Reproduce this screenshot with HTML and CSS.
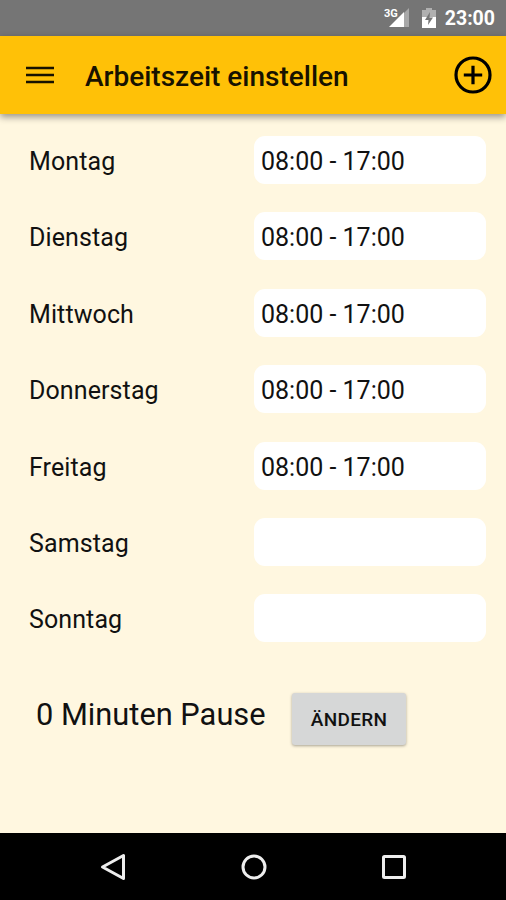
FILE: index.html
```html
<!DOCTYPE html>
<html lang="de">
<head>
    <meta charset="UTF-8">
    <meta name="viewport" content="width=device-width, initial-scale=1.0">
    <title>Arbeitszeit einstellen</title>
    <link rel="stylesheet" href="styles.css">
</head>
<body>
    <div class="status-bar">
        <svg class="signal" width="26" height="22" viewBox="0 0 26 22">
            <path d="M25 1V20H20V6Z" fill="#a8a8a8"/>
            <path d="M5 20L20 5V20Z" fill="#fff"/>
            <text x="0" y="10" class="network">3G</text>
        </svg>
        <svg class="battery" width="14" height="22" viewBox="0 0 14 22">
            <path d="M4 1H10V3H14V11H0V3H4Z" fill="#b0b0b0"/>
            <path d="M0 10H14V21H0Z" fill="#fff"/>
            <path d="M8 5L3 13H6.5L6 18L11 10.5H7.500Z" fill="#757575"/>
        </svg>
        <span class="clock">23:00</span>
    </div>

    <header class="toolbar">
        <svg class="menu" width="28" height="18" viewBox="0 0 28 18">
            <path d="M0 2H28M0 9H28M0 16H28" stroke="#171200" stroke-width="2.3"/>
        </svg>
        <h1>Arbeitszeit einstellen</h1>
        <svg class="add" width="38" height="38" viewBox="0 0 38 38">
            <circle cx="19" cy="19" r="17" fill="none" stroke="#000" stroke-width="3.2"/>
            <path d="M19 9.800V28.200M9.800 19H28.200" stroke="#000" stroke-width="3.2"/>
        </svg>
    </header>

    <main>
        <div class="day"><label>Montag</label><div class="time">08:00 - 17:00</div></div>
        <div class="day"><label>Dienstag</label><div class="time">08:00 - 17:00</div></div>
        <div class="day"><label>Mittwoch</label><div class="time">08:00 - 17:00</div></div>
        <div class="day"><label>Donnerstag</label><div class="time">08:00 - 17:00</div></div>
        <div class="day"><label>Freitag</label><div class="time">08:00 - 17:00</div></div>
        <div class="day"><label>Samstag</label><div class="time"></div></div>
        <div class="day"><label>Sonntag</label><div class="time"></div></div>

        <div class="pause">
            <span>0 Minuten Pause</span>
            <button type="button">ÄNDERN</button>
        </div>
    </main>

    <nav class="nav-bar">
        <svg width="28" height="28" viewBox="0 0 28 28">
            <path d="M3.500 14L24.500 2.500V25.500Z"/>
        </svg>
        <svg width="28" height="28" viewBox="0 0 28 28">
            <circle cx="14" cy="14" r="11"/>
        </svg>
        <svg width="28" height="28" viewBox="0 0 28 28">
            <rect x="3.500" y="3.500" width="21" height="21" rx="1"/>
        </svg>
    </nav>
</body>
</html>
```
FILE: styles.css
```css
* {
    box-sizing: border-box;
}
body {
    font-family: Roboto, sans-serif;
    background-color: #fff7e0;
    color: #111;
    display: flex;
    flex-direction: column;
    height: 900px;
    margin: 0;
    overflow: hidden;
}
svg {
    display: block;
    flex: none;
}

/* Status bar */
.status-bar {
    display: flex;
    align-items: center;
    justify-content: flex-end;
    height: 36px;
    padding: 0 11px 0 0;
    background-color: #757575;
    color: #fff;
}
.network {
    font-size: 11px;
    font-weight: 700;
    fill: #fff;
}
.battery {
    margin: 0 9px 0 12px;
}
.clock {
    font-size: 19.5px;
    font-weight: 700;
    line-height: 36px;
    padding-top: 2px;
}

/* Toolbar */
.toolbar {
    display: flex;
    align-items: center;
    height: 78px;
    padding: 0 14px 0 26px;
    background-color: #ffc107;
    box-shadow: 0 3px 7px rgba(0, 0, 0, 0.4);
}
h1 {
    flex: 1;
    margin: 2px 0 0 31px;
    font-size: 28px;
    font-weight: 500;
    color: #171200;
}

/* Working hours */
main {
    flex: 1;
    padding: 22px 20px 0 29px;
}
.day {
    display: flex;
    align-items: center;
    justify-content: space-between;
    height: 48px;
    margin-bottom: 28.4px;
    font-size: 25px;
}
.time {
    width: 232px;
    height: 48px;
    padding: 1px 7px 0;
    line-height: 49px;
    border-radius: 11px;
    background-color: #fff;
}
label {
    padding-top: 3px;
    letter-spacing: 0.1px;
}
.pause {
    display: flex;
    align-items: center;
    margin-top: 51px;
    padding-left: 7px;
    font-size: 30.8px;
}
.pause span {
    width: 256px;
    margin-top: -9px;
}
button {
    width: 114px;
    height: 52px;
    padding: 0;
    border: none;
    border-radius: 3px;
    background-color: #d6d7d7;
    box-shadow: 0 1px 3px rgba(0, 0, 0, 0.35);
    font-family: Roboto, sans-serif;
    font-size: 19px;
    font-weight: 500;
    letter-spacing: 0.3px;
    color: #111;
}

/* Navigation bar */
.nav-bar {
    display: flex;
    align-items: center;
    justify-content: space-between;
    height: 67px;
    padding: 0 98px 0 99px;
    background-color: #000;
}
.nav-bar svg {
    fill: none;
    stroke: #eee;
    stroke-width: 3;
    stroke-linejoin: round;
}
```
